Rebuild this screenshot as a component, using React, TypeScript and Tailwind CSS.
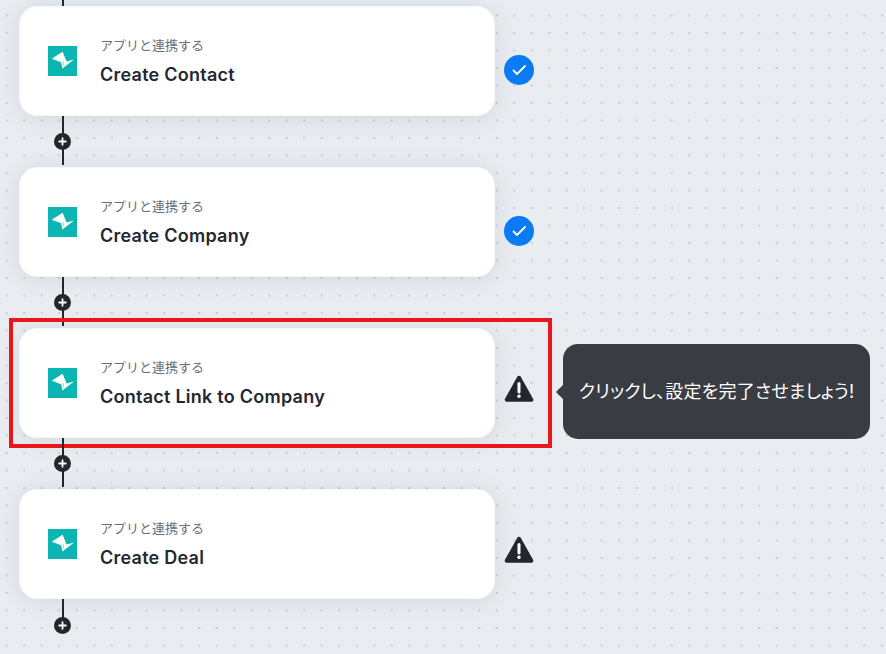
const steps = [
  { title: 'Create Contact', status: 'done' },
  { title: 'Create Company', status: 'done' },
  { title: 'Contact Link to Company', status: 'warn', hint: 'クリックし、設定を完了させましょう!', selected: true },
  { title: 'Create Deal', status: 'warn' },
];

function AppLogo() {
  return (
    <svg width="29" height="30" viewBox="0 0 29 30" className="shrink-0">
      <rect width="29" height="30" fill="#0bb5b1" />
      <path d="M3.7 12.8 14.6 5.8 18.6 15.6 26 13.4 14.4 22.6 13.2 16.2Z" fill="#fff" />
      <path d="M14.8 15 15.8 19.5" stroke="#0bb5b1" strokeWidth="0.5" />
    </svg>
  );
}

function DoneIcon() {
  return (
    <svg width="30" height="30" viewBox="0 0 30 30" className="mt-[18px] shrink-0">
      <circle cx="15" cy="15" r="15" fill="#0a7bf2" />
      <path d="M9.5 15.5 13 19 21 11" fill="none" stroke="#fff" strokeWidth="1.8" strokeLinecap="round" strokeLinejoin="round" />
    </svg>
  );
}

function WarnIcon() {
  return (
    <svg width="30" height="28" viewBox="0 0 30 28" className="mt-[12px] shrink-0">
      <path d="M15 2.8 27.3 24.8H2.7Z" fill="#22262d" stroke="#22262d" strokeWidth="4" strokeLinejoin="round" />
      <path d="M15 8.5V17" stroke="#fff" strokeWidth="3" strokeLinecap="round" />
      <circle cx="15" cy="21.3" r="1.7" fill="#fff" />
    </svg>
  );
}

function Connector({ last }: { last?: boolean }) {
  return (
    <div className={last ? 'flex h-[34px] w-[476px] flex-col pl-[35px]' : 'flex h-[51px] w-[476px] flex-col pl-[35px]'}>
      <div className="relative h-[49px] w-[17px]">
        <div className={last ? 'mx-auto h-[26px] w-[2px] bg-[#22262d]' : 'mx-auto h-full w-[2px] bg-[#22262d]'} />
        <div className={last ? 'absolute left-0 top-[18px] flex h-[17px] w-[17px] items-center justify-center rounded-full bg-[#22262d]' : 'absolute left-0 top-[16.5px] flex h-[17px] w-[17px] items-center justify-center rounded-full bg-[#22262d]'}>
          <svg width="9" height="9" viewBox="0 0 9 9">
            <path d="M4.5 1.2v6.6M1.2 4.5h6.6" stroke="#fff" strokeWidth="1.8" strokeLinecap="round" />
          </svg>
        </div>
      </div>
    </div>
  );
}

export default function App() {
  return (
    <div className="h-[654px] w-[886px] overflow-hidden bg-[#e9ecf1] bg-[radial-gradient(circle,#c9cdd4_1px,transparent_1.2px)] bg-[length:17.5px_17.5px] bg-[position:-2px_6.75px] pl-[19px] font-['Inter','Noto_Sans_CJK_JP',sans-serif]">
      <div className="ml-[35px] flex h-[6px] w-[17px] justify-center">
        <div className="h-full w-[2px] bg-[#22262d]" />
      </div>
      {steps.map((step, i) => (
        <div key={step.title}>
          <div className="relative flex items-center">
            <div className="flex h-[110px] w-[476px] shrink-0 items-center rounded-[18px] border border-[#f7f8f9] bg-white pl-[28px] shadow-[0_2px_22px_rgba(60,70,90,0.12)]">
              <AppLogo />
              <div className="ml-[23px] flex flex-col">
                <span className="text-[13px] leading-[18px] text-[#6a6e75]">アプリと連携する</span>
                <span className="mt-[9px] text-[18px] leading-[24px] font-semibold tracking-[0.25px] text-[#24282f]">{step.title}</span>
              </div>
            </div>
            <div className="ml-[9px] flex">{step.status === 'done' ? <DoneIcon /> : <WarnIcon />}</div>
            {step.hint && (
              <div className="absolute top-[16px] left-[544px] flex h-[95px] w-[307px] items-center justify-center rounded-[15px] bg-[#393c43] text-[18px] tracking-[0.2px] whitespace-nowrap text-white [font-feature-settings:'palt']">
                <div className="absolute top-[43px] -left-[5px] h-[10px] w-[10px] rotate-45 bg-[#393c43]" />
                {step.hint}
              </div>
            )}
            {step.selected && (
              <div className="pointer-events-none absolute -top-[10px] -left-[10px] h-[130px] w-[543px] border-4 border-[#e8171b]" />
            )}
          </div>
          <Connector last={i === steps.length - 1} />
        </div>
      ))}
    </div>
  );
}
